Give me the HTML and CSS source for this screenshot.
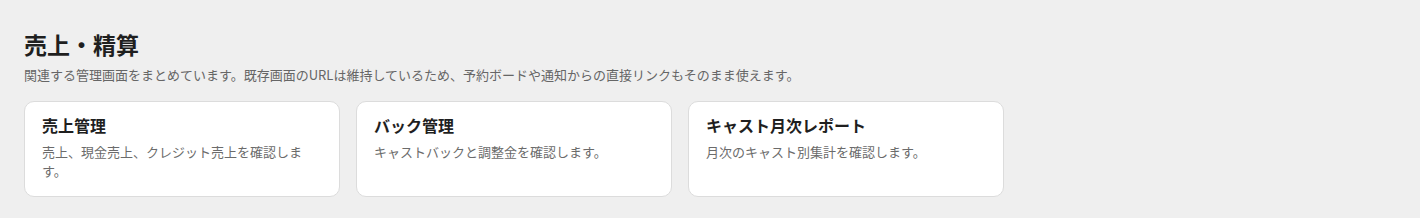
FILE: index.html
```html
<!DOCTYPE html>
<html lang="ja">
<head>
<meta charset="utf-8">
<link rel="stylesheet" href="styles.css">
</head>
<body>
<main class="page">
  <h1 class="page-title">売上・精算</h1>
  <p class="page-desc">関連する管理画面をまとめています。既存画面のURLは維持しているため、予約ボードや通知からの直接リンクもそのまま使えます。</p>
  <div class="cards">
    <a class="card" href="#">
      <h2 class="card-title">売上管理</h2>
      <p class="card-desc">売上、現金売上、クレジット売上を確認します。</p>
    </a>
    <a class="card" href="#">
      <h2 class="card-title">バック管理</h2>
      <p class="card-desc">キャストバックと調整金を確認します。</p>
    </a>
    <a class="card" href="#">
      <h2 class="card-title">キャスト月次レポート</h2>
      <p class="card-desc">月次のキャスト別集計を確認します。</p>
    </a>
  </div>
</main>
</body>
</html>
```
FILE: styles.css
```css
html, body {
  margin: 0;
  padding: 0;
  background: #efefef;
}
body {
  font-family: "Noto Sans CJK JP", "Noto Sans", sans-serif;
  color: #1f1f1f;
}
.page {
  padding: 29px 24px 20px;
}
.page-title {
  margin: 0;
  font-size: 23px;
  line-height: 30px;
  font-weight: 700;
  color: #1f1f1f;
}
.page-desc {
  margin: 6px 0 0;
  font-size: 13px;
  line-height: 20px;
  color: #666;
}
.cards {
  display: grid;
  grid-template-columns: repeat(3, 316px);
  gap: 16px;
  margin-top: 16px;
}
.card {
  display: block;
  box-sizing: border-box;
  height: 96px;
  padding: 12px 17px;
  background: #fff;
  border: 1px solid #dcdcdc;
  border-radius: 10px;
  text-decoration: none;
  color: inherit;
}
.card-title {
  margin: 0;
  font-size: 16px;
  line-height: 22px;
  font-weight: 700;
  color: #1f1f1f;
}
.card-desc {
  margin: 6px 0 0;
  font-size: 13px;
  line-height: 19px;
  color: #6b6b6b;
}
```
